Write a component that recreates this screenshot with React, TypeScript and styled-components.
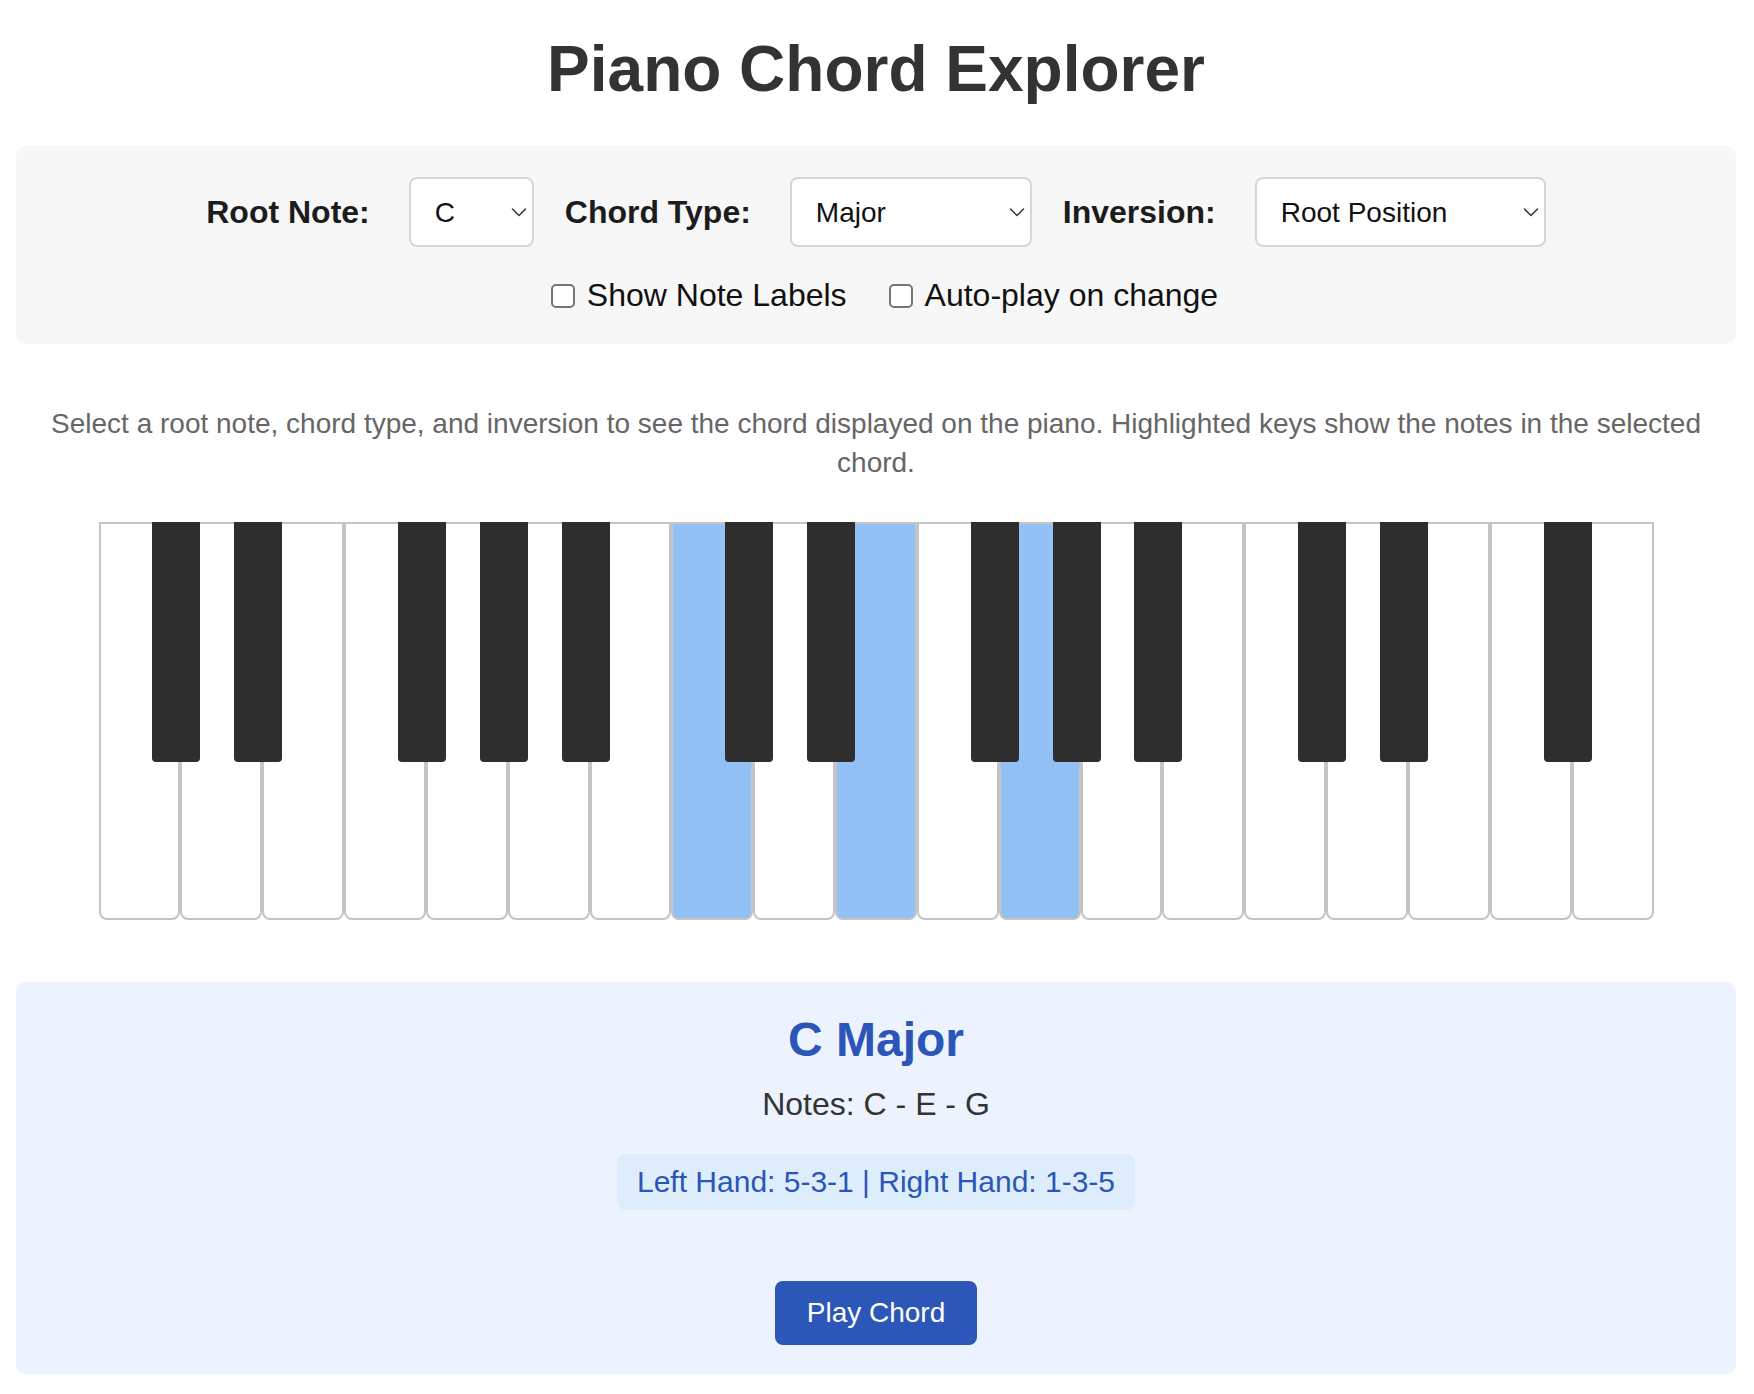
import React, { useState } from "react";
import styled, { createGlobalStyle } from "styled-components";

const GlobalStyle = createGlobalStyle`
  html, body { margin: 0; padding: 0; background: #ffffff; }
  body { font-family: "Liberation Sans", Arial, Helvetica, sans-serif; }
  * { box-sizing: border-box; }
`;

const Page = styled.div`
  padding: 16px 18px 16px 16px;
  font-family: "Liberation Sans", Arial, Helvetica, sans-serif;
`;

const Title = styled.h1`
  margin: 16px 0 40px;
  font-size: 64px;
  font-weight: 700;
  line-height: normal;
  color: #333333;
  text-align: center;
`;

const ControlPanel = styled.section`
  background: #f7f7f7;
  border-radius: 10px;
  padding: 31px 16px 30px;
  display: flex;
  flex-direction: column;
  align-items: center;
  gap: 30px;
`;

const ControlRow = styled.div`
  display: flex;
  align-items: center;
  justify-content: center;
  gap: 31px;
`;

const Field = styled.div`
  display: flex;
  align-items: center;
  gap: 39px;
`;

const FieldLabel = styled.label`
  font-size: 32px;
  font-weight: 700;
  color: #1c1c1c;
  line-height: normal;
`;

const SelectWrap = styled.div<{ $w: number }>`
  position: relative;
  width: ${(p) => p.$w}px;
  height: 70px;
`;

const Select = styled.select`
  appearance: none;
  -webkit-appearance: none;
  width: 100%;
  height: 100%;
  padding: 0 40px 0 24px;
  font-family: "Liberation Sans", Arial, Helvetica, sans-serif;
  font-size: 28px;
  color: #111111;
  background: #ffffff;
  border: 2px solid #d6d6d6;
  border-radius: 8px;
  outline: none;
`;

const Chevron = styled.svg`
  position: absolute;
  right: 7px;
  top: 50%;
  transform: translateY(-50%);
  pointer-events: none;
`;

const CheckRow = styled.div`
  display: flex;
  align-items: center;
  justify-content: center;
  gap: 42px;
  padding-left: 17px;
`;

const CheckLabel = styled.label`
  display: flex;
  align-items: center;
  font-size: 32px;
  color: #111111;
  line-height: normal;
`;

const CheckBox = styled.input`
  appearance: none;
  -webkit-appearance: none;
  width: 24px;
  height: 24px;
  margin: 0 12px 0 0;
  border: 2px solid #767676;
  border-radius: 5px;
  background: #ffffff;
`;

const Description = styled.p`
  margin: 60px 0 40px;
  font-size: 28px;
  line-height: 1.4;
  color: #666666;
  text-align: center;
`;

const Piano = styled.div`
  position: relative;
  width: 1555px;
  height: 398px;
  margin: 0 auto;
  display: flex;
`;

const WhiteKey = styled.div<{ $active: boolean }>`
  flex: 1;
  height: 100%;
  background: ${(p) => (p.$active ? "#93c1f6" : "#ffffff")};
  border: 2px solid #c4c4c4;
  border-radius: 0 0 8px 8px;
`;

const BlackKey = styled.div`
  position: absolute;
  top: 0;
  width: 48px;
  height: 240px;
  background: #2e2e2e;
  border-radius: 0 0 4px 4px;
  z-index: 2;
`;

const InfoPanel = styled.section`
  margin-top: 62px;
  background: #ecf3fe;
  border-radius: 10px;
  padding: 30px 16px 29px;
  display: flex;
  flex-direction: column;
  align-items: center;
`;

const ChordName = styled.h2`
  margin: 0 0 19px;
  font-size: 48px;
  font-weight: 700;
  line-height: normal;
  color: #2b56b8;
`;

const NotesLine = styled.p`
  margin: 0 0 31px;
  font-size: 32px;
  line-height: normal;
  color: #333333;
`;

const Fingering = styled.div`
  padding: 11px 20px;
  border-radius: 8px;
  background: #deedfc;
  color: #2b56b8;
  font-size: 30px;
  line-height: normal;
`;

const PlayButton = styled.button`
  margin-top: 71px;
  height: 64px;
  padding: 0 32px;
  border: none;
  border-radius: 8px;
  background: #2c56b8;
  color: #ffffff;
  font-family: "Liberation Sans", Arial, Helvetica, sans-serif;
  font-size: 28px;
  cursor: pointer;
`;

const ChevronIcon = () => (
  <Chevron width="16" height="10" viewBox="0 0 16 10" aria-hidden="true">
    <polyline
      points="1.5,2 8,8.5 14.5,2"
      fill="none"
      stroke="#3a3a3a"
      strokeWidth="1.6"
      strokeLinecap="round"
      strokeLinejoin="round"
    />
  </Chevron>
);

const ROOTS = ["C", "C#", "D", "D#", "E", "F", "F#", "G", "G#", "A", "A#", "B"];
const TYPES = ["Major", "Minor", "Diminished", "Augmented", "Major 7th", "Minor 7th", "Dominant 7th"];
const INVERSIONS = ["Root Position", "1st Inversion", "2nd Inversion"];

const WHITE_NAMES = ["C", "D", "E", "F", "G", "A", "B"];
const WHITE_COUNT = 19;
const ACTIVE = new Set([7, 9, 11]);
const HAS_BLACK_AFTER = new Set([0, 1, 3, 4, 5]);

export default function App() {
  const [root, setRoot] = useState("C");
  const [type, setType] = useState("Major");
  const [inv, setInv] = useState("Root Position");

  const whites = Array.from({ length: WHITE_COUNT }, (_, i) => ({
    name: WHITE_NAMES[i % 7],
    active: ACTIVE.has(i),
  }));
  const blacks = Array.from({ length: WHITE_COUNT - 1 }, (_, i) => i).filter((i) =>
    HAS_BLACK_AFTER.has(i % 7)
  );

  return (
    <>
      <GlobalStyle />
      <Page>
        <Title>Piano Chord Explorer</Title>
        <ControlPanel>
          <ControlRow>
            <Field>
              <FieldLabel>Root Note:</FieldLabel>
              <SelectWrap $w={125}>
                <Select value={root} onChange={(e) => setRoot(e.target.value)}>
                  {ROOTS.map((r) => (
                    <option key={r}>{r}</option>
                  ))}
                </Select>
                <ChevronIcon />
              </SelectWrap>
            </Field>
            <Field>
              <FieldLabel>Chord Type:</FieldLabel>
              <SelectWrap $w={242}>
                <Select value={type} onChange={(e) => setType(e.target.value)}>
                  {TYPES.map((t) => (
                    <option key={t}>{t}</option>
                  ))}
                </Select>
                <ChevronIcon />
              </SelectWrap>
            </Field>
            <Field>
              <FieldLabel>Inversion:</FieldLabel>
              <SelectWrap $w={291}>
                <Select value={inv} onChange={(e) => setInv(e.target.value)}>
                  {INVERSIONS.map((t) => (
                    <option key={t}>{t}</option>
                  ))}
                </Select>
                <ChevronIcon />
              </SelectWrap>
            </Field>
          </ControlRow>
          <CheckRow>
            <CheckLabel>
              <CheckBox type="checkbox" />
              Show Note Labels
            </CheckLabel>
            <CheckLabel>
              <CheckBox type="checkbox" />
              Auto-play on change
            </CheckLabel>
          </CheckRow>
        </ControlPanel>

        <Description>
          Select a root note, chord type, and inversion to see the chord displayed on the piano.
          Highlighted keys show the notes in the selected chord.
        </Description>

        <Piano>
          {whites.map((k, i) => (
            <WhiteKey key={`w${i}`} $active={k.active} title={k.name} />
          ))}
          {blacks.map((i) => (
            <BlackKey
              key={`b${i}`}
              style={{ left: `calc(${((i + 1) * 100) / WHITE_COUNT}% - 28px)` }}
            />
          ))}
        </Piano>

        <InfoPanel>
          <ChordName>
            {root} {type}
          </ChordName>
          <NotesLine>Notes: C - E - G</NotesLine>
          <Fingering>Left Hand: 5-3-1 | Right Hand: 1-3-5</Fingering>
          <PlayButton>Play Chord</PlayButton>
        </InfoPanel>
      </Page>
    </>
  );
}
